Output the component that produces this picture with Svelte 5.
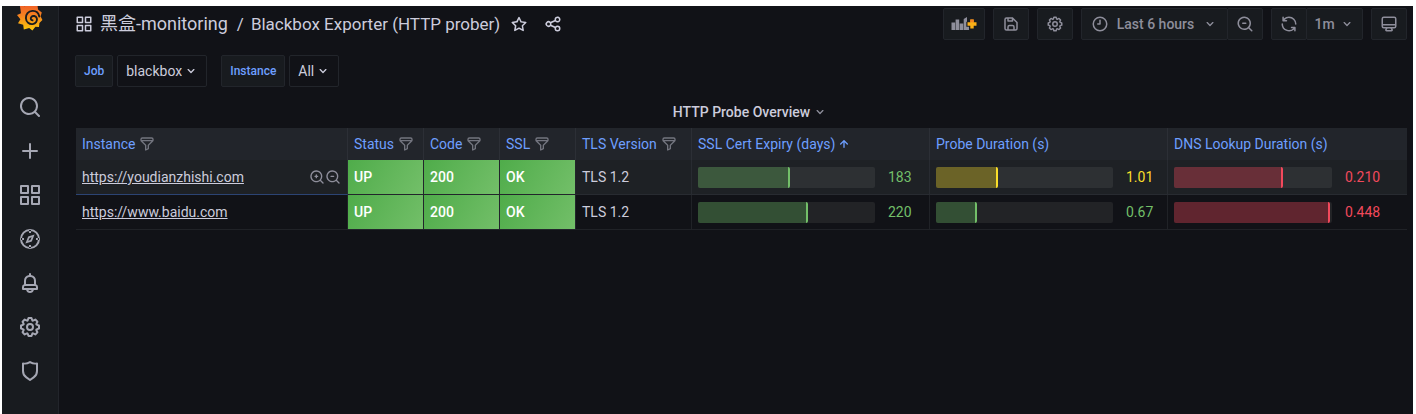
<script>
  const ring = 'M12,2A10,10,0,1,0,22,12,10,10,0,0,0,12,2Zm0,18a8,8,0,1,1,8-8A8,8,0,0,1,12,20Z';
  const lens = 'M21.71,20.29,18,16.61A9,9,0,1,0,16.61,18l3.68,3.68a1,1,0,0,0,1.42,0A1,1,0,0,0,21.71,20.29ZM11,18a7,7,0,1,1,7-7A7,7,0,0,1,11,18Z';
  const paths = {
    apps: 'M10,13H3a1,1,0,0,0-1,1v7a1,1,0,0,0,1,1h7a1,1,0,0,0,1-1V14A1,1,0,0,0,10,13ZM9,20H4V15H9ZM21,2H14a1,1,0,0,0-1,1v7a1,1,0,0,0,1,1h7a1,1,0,0,0,1-1V3A1,1,0,0,0,21,2ZM20,9H15V4h5Zm1,4H14a1,1,0,0,0-1,1v7a1,1,0,0,0,1,1h7a1,1,0,0,0,1-1V14A1,1,0,0,0,21,13Zm-1,7H15V15h5ZM10,2H3A1,1,0,0,0,2,3v7a1,1,0,0,0,1,1h7a1,1,0,0,0,1-1V3A1,1,0,0,0,10,2ZM9,9H4V4H9Z',
    down: 'M17,9.17a1,1,0,0,0-1.41,0L12,12.71,8.46,9.17a1,1,0,0,0-1.41,0,1,1,0,0,0,0,1.42l4.24,4.24a1,1,0,0,0,1.42,0L17,10.59A1,1,0,0,0,17,9.17Z',
    star: 'M22,9.67A1,1,0,0,0,21.14,9l-5.69-.83L12.9,3a1,1,0,0,0-1.8,0L8.55,8.16,2.86,9a1,1,0,0,0-.81.68,1,1,0,0,0,.25,1l4.13,4-1,5.68A1,1,0,0,0,6.9,21.44L12,18.77l5.1,2.67a.93.93,0,0,0,.46.12,1,1,0,0,0,.59-.19,1,1,0,0,0,.4-1l-1-5.68,4.13-4A1,1,0,0,0,22,9.67Zm-6.15,4a1,1,0,0,0-.29.88l.72,4.2-3.76-2a1.06,1.06,0,0,0-.94,0l-3.76,2,.72-4.2a1,1,0,0,0-.29-.88l-3-3,4.21-.61a1,1,0,0,0,.76-.55L12,5.7l1.88,3.82a1,1,0,0,0,.76.55l4.21.61Z',
    share: 'M18,14a4,4,0,0,0-3.08,1.48l-5.1-2.35a3.64,3.64,0,0,0,0-2.26l5.1-2.35A4,4,0,1,0,14,6a4.17,4.17,0,0,0,.07.71L8.79,9.14a4,4,0,1,0,0,5.72l5.28,2.43A4.17,4.17,0,0,0,14,18a4,4,0,1,0,4-4ZM18,4a2,2,0,1,1-2,2A2,2,0,0,1,18,4ZM6,14a2,2,0,1,1,2-2A2,2,0,0,1,6,14Zm12,6a2,2,0,1,1,2-2A2,2,0,0,1,18,20Z',
    save: 'M20.71,9.29l-6-6a1,1,0,0,0-.32-.21A1.09,1.09,0,0,0,14,3H6A3,3,0,0,0,3,6V18a3,3,0,0,0,3,3H18a3,3,0,0,0,3-3V10A1,1,0,0,0,20.71,9.29ZM9,5h4V7H9Zm6,14H9V16a1,1,0,0,1,1-1h4a1,1,0,0,1,1,1Zm4-1a1,1,0,0,1-1,1H17V16a3,3,0,0,0-3-3H10a3,3,0,0,0-3,3v3H6a1,1,0,0,1-1-1V6A1,1,0,0,1,6,5H7V8A1,1,0,0,0,8,9h6a1,1,0,0,0,1-1V6.41l4,4Z',
    cog: 'M21.32,9.55l-1.89-.63.89-1.78A1,1,0,0,0,20.13,6L18,3.87a1,1,0,0,0-1.15-.19l-1.78.89-.63-1.89A1,1,0,0,0,13.5,2h-3a1,1,0,0,0-.95.68L8.92,4.57,7.14,3.68A1,1,0,0,0,6,3.87L3.87,6a1,1,0,0,0-.19,1.15l.89,1.78-1.89.63A1,1,0,0,0,2,10.5v3a1,1,0,0,0,.68.95l1.89.63-.89,1.78A1,1,0,0,0,3.87,18L6,20.13a1,1,0,0,0,1.15.19l1.78-.89.63,1.89a1,1,0,0,0,.95.68h3a1,1,0,0,0,.95-.68l.63-1.89,1.78.89A1,1,0,0,0,18,20.13L20.13,18a1,1,0,0,0,.19-1.15l-.89-1.78,1.89-.63A1,1,0,0,0,22,13.5v-3A1,1,0,0,0,21.32,9.55ZM20,12.78l-1.2.4A2,2,0,0,0,17.64,16l.57,1.14-1.1,1.1L16,17.64a2,2,0,0,0-2.79,1.16l-.4,1.2H11.22l-.4-1.2A2,2,0,0,0,8,17.64l-1.14.57-1.1-1.1L6.36,16A2,2,0,0,0,5.2,13.18L4,12.78V11.22l1.2-.4A2,2,0,0,0,6.36,8L5.79,6.89l1.1-1.1L8,6.36A2,2,0,0,0,10.82,5.2l.4-1.2h1.56l.4,1.2A2,2,0,0,0,16,6.36l1.14-.57,1.1,1.1L17.64,8a2,2,0,0,0,1.16,2.79l1.2.4ZM12,8a4,4,0,1,0,4,4A4,4,0,0,0,12,8Zm0,6a2,2,0,1,1,2-2A2,2,0,0,1,12,14Z',
    clock: ring + 'M12,6a1,1,0,0,0-1,1v4H9a1,1,0,0,0,0,2h3a1,1,0,0,0,1-1V7A1,1,0,0,0,12,6Z',
    search: lens,
    zoomOut: lens + 'M13,10H9a1,1,0,0,0,0,2h4a1,1,0,0,0,0-2Z',
    zoomIn: lens + 'M13,10H12V9a1,1,0,0,0-2,0v1H9a1,1,0,0,0,0,2h1v1a1,1,0,0,0,2,0V12h1a1,1,0,0,0,0-2Z',
    sync: 'M19.91,15.51H15.38a1,1,0,0,0,0,2h2.4A8,8,0,0,1,4,12a1,1,0,0,0-2,0,10,10,0,0,0,16.88,7.23V21a1,1,0,0,0,2,0V16.5A1,1,0,0,0,19.91,15.51ZM12,2A10,10,0,0,0,5.12,4.77V3a1,1,0,0,0-2,0V7.5a1,1,0,0,0,1,1h4.5a1,1,0,0,0,0-2H6.22A8,8,0,0,1,20,12a1,1,0,0,0,2,0A10,10,0,0,0,12,2Z',
    monitor: 'M19,2H5A3,3,0,0,0,2,5V15a3,3,0,0,0,3,3H7.64l-.58,1a2,2,0,0,0,0,2,2,2,0,0,0,1.75,1h6.46A2,2,0,0,0,17,21a2,2,0,0,0,0-2l-.59-1H19a3,3,0,0,0,3-3V5A3,3,0,0,0,19,2ZM8.77,20,10,18H14l1.2,2ZM20,15a1,1,0,0,1-1,1H5a1,1,0,0,1-1-1V14H20Zm0-3H4V5A1,1,0,0,1,5,4H19a1,1,0,0,1,1,1Z',
    plus: 'M19,11H13V5a1,1,0,0,0-2,0v6H5a1,1,0,0,0,0,2h6v6a1,1,0,0,0,2,0V13h6a1,1,0,0,0,0-2Z',
    compass: ring + 'M11,3h2v3h-2ZM11,18h2v3h-2ZM3,11h3v2H3ZM18,11h3v2h-3ZM16.6,7.4,10.2,9.6,7.4,16.6,13.8,14.4ZM11.6,11,13.7,10.3,12.4,13,10.3,13.7Z',
    bell: 'M18,13.18V10a6,6,0,0,0-5-5.91V3a1,1,0,0,0-2,0V4.09A6,6,0,0,0,6,10v3.18A3,3,0,0,0,4,16v2a1,1,0,0,0,1,1H8.14a4,4,0,0,0,7.72,0H19a1,1,0,0,0,1-1V16A3,3,0,0,0,18,13.18ZM8,10a4,4,0,0,1,8,0v3H8Zm4,10a2,2,0,0,1-1.72-1h3.44A2,2,0,0,1,12,20Zm6-3H6V16a1,1,0,0,1,1-1H17a1,1,0,0,1,1,1Z',
    shield: 'M19.63,3.65a1,1,0,0,0-.84-.2,8,8,0,0,1-6.22-1.27,1,1,0,0,0-1.14,0A8,8,0,0,1,5.21,3.45a1,1,0,0,0-.84.2A1,1,0,0,0,4,4.43v7.45a9,9,0,0,0,3.77,7.33l3.65,2.6a1,1,0,0,0,1.16,0l3.65-2.6A9,9,0,0,0,20,11.88V4.43A1,1,0,0,0,19.63,3.65ZM18,11.88a7,7,0,0,1-2.93,5.7L12,19.77,8.93,17.58A7,7,0,0,1,6,11.88V5.58a10,10,0,0,0,6-1.39,10,10,0,0,0,6,1.39Z',
    filter: 'M19,2H5A3,3,0,0,0,2,5V6.17a3,3,0,0,0,.25,1.2l0,.06a2.81,2.81,0,0,0,.59.86L9,14.41V21a1,1,0,0,0,.47.85A1,1,0,0,0,10,22a1,1,0,0,0,.45-.11l4-2A1,1,0,0,0,15,19V14.41l6.12-6.12a2.81,2.81,0,0,0,.59-.86l0-.06A3,3,0,0,0,22,6.17V5A3,3,0,0,0,19,2ZM13.29,13.29A1,1,0,0,0,13,14v4.38l-2,1V14a1,1,0,0,0-.29-.71L5.41,8H18.59ZM20,6H4V5A1,1,0,0,1,5,4H19a1,1,0,0,1,1,1Z',
    up: 'M17.71,11.29l-5-5a1,1,0,0,0-.33-.21,1,1,0,0,0-.76,0,1,1,0,0,0-.33.21l-5,5a1,1,0,0,0,1.42,1.42L11,9.41V17a1,1,0,0,0,2,0V9.41l3.29,3.3a1,1,0,0,0,1.42,0A1,1,0,0,0,17.71,11.29Z'
  };

  const nav = [
    ['search', 'Search'], ['plus', 'Create'], ['apps', 'Dashboards'], ['compass', 'Explore'],
    ['bell', 'Alerting'], ['cog', 'Configuration'], ['shield', 'Server admin']
  ];
  const columns = [
    { name: 'Instance', cls: 'instance', filter: true },
    { name: 'Status', cls: 'short', filter: true },
    { name: 'Code', cls: 'short', filter: true },
    { name: 'SSL', cls: 'short', filter: true },
    { name: 'TLS Version', cls: 'tls', filter: true },
    { name: 'SSL Cert Expiry (days)', cls: 'gauge-col', sorted: true },
    { name: 'Probe Duration (s)', cls: 'gauge-col' },
    { name: 'DNS Lookup Duration (s)', cls: 'last-col' }
  ];
  const rows = [
    {
      url: 'https://youdianzhishi.com', active: true, flags: ['UP', '200', 'OK'], tls: 'TLS 1.2',
      gauges: [
        { text: '183', fill: 52, tone: 'green' },
        { text: '1.01', fill: 35, tone: 'yellow' },
        { text: '0.210', fill: 69, tone: 'red', wide: true }
      ]
    },
    {
      url: 'https://www.baidu.com', flags: ['UP', '200', 'OK'], tls: 'TLS 1.2',
      gauges: [
        { text: '220', fill: 62, tone: 'green' },
        { text: '0.67', fill: 23, tone: 'green' },
        { text: '0.448', fill: 99, tone: 'red', wide: true }
      ]
    }
  ];
</script>

{#snippet icon(name, size)}
  <svg class="icon" width={size} height={size} viewBox="0 0 24 24" fill="currentColor" fill-rule={name === 'compass' ? 'evenodd' : 'nonzero'} aria-hidden="true"><path d={paths[name]} /></svg>
{/snippet}

<div class="app">
  <nav class="sidebar" aria-label="Main">
    <a class="logo" href="#home" aria-label="Home">
      <svg width="26" height="26" viewBox="0 0 26 26" aria-hidden="true">
        <defs><linearGradient id="flame" x1="0" y1="0" x2="0" y2="1"><stop offset="0" stop-color="#f05a28" /><stop offset=".45" stop-color="#f58220" /><stop offset="1" stop-color="#fbca0a" /></linearGradient></defs>
        <path fill="url(#flame)" d="M2.800-1 8 .2 11.500-2.500 14.500 0 20.500-.8 21 3.400 24.800 6.400 23.600 10.200 25.400 14 22.400 17 22 21 18.400 20.800 15.400 24.400 12.200 22 6.800 23.600 6.200 18.800 1 17.200 3.400 13.200 0 9 4 7.200Z" />
        <path fill="none" stroke="#181b1f" stroke-width="1.900" stroke-linecap="round" d="M22.300 10.500C21.500 6.800 18.700 4.700 15.400 4.900 11.300 5.200 8.700 8.400 8.900 12.200 9.200 16.200 12.300 18.600 15.700 18.100 18.800 17.600 20.600 15 19.800 12.300 19 9.800 15.800 9.200 14.300 11 13.200 12.400 13.900 14.100 15.500 14.300" />
      </svg>
    </a>
    {#each nav as [name, label]}
      <a class="nav-item" href="#{name}" aria-label={label}>{@render icon(name, 24)}</a>
    {/each}
  </nav>

  <main>
    <header>
      <h1>
        {@render icon('apps', 18)}
        <a href="#folder">黑盒-monitoring</a>
        <span class="slash">/</span>
        <a class="name" href="#dashboard">Blackbox Exporter (HTTP prober)</a>
      </h1>
      <div class="actions">
        <button aria-label="Mark as favorite">{@render icon('star', 18)}</button>
        <button aria-label="Share dashboard">{@render icon('share', 18)}</button>
      </div>
      <div class="tools">
        <button class="tool add" aria-label="Add panel">
          <svg width="26" height="16" viewBox="0 0 26 16" aria-hidden="true">
            <path fill="currentColor" d="M.5 6.500h3.600V14H.5zM4.600 3.500h3.600V14H4.600zM8.700 7.500h3.500V14H8.700zM12.700 3 16 1v4.800h-.7v5H18V14h-5.300z" />
            <path fill="#fbb017" d="M19.300 3.500h3.400v2.800h2.800v3.400h-2.800v2.800h-3.400V9.700h-2.800V6.300h2.800z" />
            <path fill="#f58220" d="M19.300 3.500h3.400v2.800h-3.400z" />
          </svg>
        </button>
        <button class="tool" aria-label="Save dashboard">{@render icon('save', 18)}</button>
        <button class="tool" aria-label="Dashboard settings">{@render icon('cog', 18)}</button>
        <div class="group">
          <button class="tool range">{@render icon('clock', 18)}<span>Last 6 hours</span>{@render icon('down', 16)}</button>
          <button class="tool" aria-label="Zoom out time range">{@render icon('zoomOut', 18)}</button>
        </div>
        <div class="group">
          <button class="tool" aria-label="Refresh dashboard">{@render icon('sync', 18)}</button>
          <button class="tool interval"><span>1m</span>{@render icon('down', 16)}</button>
        </div>
        <button class="tool" aria-label="Cycle view mode">{@render icon('monitor', 18)}</button>
      </div>
    </header>

    <form class="variables">
      <div class="variable">
        <label for="job">Job</label>
        <div class="select"><select id="job"><option>blackbox</option></select>{@render icon('down', 16)}</div>
      </div>
      <div class="variable">
        <label for="instance">Instance</label>
        <div class="select"><select id="instance"><option>All</option></select>{@render icon('down', 16)}</div>
      </div>
    </form>

    <section class="panel">
      <h2>HTTP Probe Overview {@render icon('down', 16)}</h2>
      <table>
        <thead>
          <tr>
            {#each columns as col}
              <th class={col.cls} scope="col">
                <div class="head" class:sorted={col.sorted}>
                  <span>{col.name}</span>
                  {#if col.filter}<button class="filter" aria-label="Filter {col.name}">{@render icon('filter', 16)}</button>{/if}
                  {#if col.sorted}{@render icon('up', 16)}{/if}
                </div>
              </th>
            {/each}
          </tr>
        </thead>
        <tbody>
          {#each rows as row}
            <tr class:active={row.active}>
              <td class="first">
                <div class="link">
                  <a href={row.url}>{row.url}</a>
                  {#if row.active}
                    <span class="zooms">
                      <button aria-label="Filter for value">{@render icon('zoomIn', 16)}</button>
                      <button aria-label="Filter out value">{@render icon('zoomOut', 16)}</button>
                    </span>
                  {/if}
                </div>
              </td>
              {#each row.flags as flag}<td class="flag">{flag}</td>{/each}
              <td>{row.tls}</td>
              {#each row.gauges as g}
                <td>
                  <div class="gauge {g.tone}" class:wide={g.wide}>
                    <div class="track"><div class="fill" style="width: {g.fill}%"></div></div>
                    <span>{g.text}</span>
                  </div>
                </td>
              {/each}
            </tr>
          {/each}
        </tbody>
      </table>
    </section>
  </main>
</div>

<style>
  :global(body) { margin: 0; background: #fff; }
  * { box-sizing: border-box; }
  .app {
    display: flex;
    min-height: calc(100vh - 6px);
    margin: 6px 3px 0 2px;
    background: #111217;
    color: #ccccdc;
    font: 14px/20px Roboto, "Noto Sans CJK SC", sans-serif;
  }
  .icon { display: block; flex: none; }
  button { padding: 0; border: 0; background: none; color: inherit; font: inherit; }
  a { color: inherit; text-decoration: none; }

  .sidebar {
    display: flex;
    flex: none;
    flex-direction: column;
    width: 57px;
    border-right: 1px solid #22252b;
    background: #181b1f;
    color: #a5a7b3;
  }
  .logo { display: flex; justify-content: center; height: 79px; }
  .nav-item { display: flex; align-items: center; justify-content: center; height: 44px; }

  main { flex: 1; min-width: 0; padding: 0 6px 0 16px; }
  header { display: flex; align-items: center; height: 36px; }
  h1 { display: flex; align-items: center; gap: 7px; margin: 0; font-size: 18px; font-weight: 400; line-height: 24px; white-space: nowrap; }
  .slash { padding-left: 2px; }
  .slash, .name { font-size: 17px; }
  .actions { display: flex; gap: 16px; margin-left: 10px; }
  .tools { display: flex; gap: 8px; margin-left: auto; color: #8e8e9b; font-weight: 500; }
  .group { display: flex; }
  .tool {
    display: flex;
    align-items: center;
    justify-content: center;
    width: 36px;
    height: 32px;
    border: 1px solid #22252b;
    border-radius: 2px;
    background: #181b1f;
  }
  .group .tool + .tool { margin-left: -1px; }
  .add { width: 42px; }
  .range { gap: 8px; width: 147px; }
  .interval { gap: 4px; width: 57px; }

  .variables { display: flex; gap: 14px; margin-top: 13px; }
  .variable { display: flex; gap: 4px; }
  label, .select { border: 1px solid #22252b; border-radius: 2px; }
  label { padding: 0 8px; background: #181b1f; color: #6e9fff; font-size: 12px; font-weight: 500; line-height: 30px; }
  .select { display: flex; position: relative; }
  .select .icon { position: absolute; top: 7px; right: 7px; pointer-events: none; }
  select { height: 30px; padding: 0 24px 0 8px; border: 0; background: none; color: inherit; font: inherit; appearance: none; }

  .panel { padding-left: 1px; }
  h2 { display: flex; align-items: center; justify-content: center; gap: 2px; height: 32px; margin: 9px 0 0; padding-left: 18px; font-size: 14px; font-weight: 500; }
  h2 .icon { color: #8e8e9b; }
  table { width: 100%; border-collapse: separate; border-spacing: 0; table-layout: fixed; }
  th { height: 32px; padding: 0 6px; border-right: 1px solid #2c2f36; background: #22252b; color: #6e9fff; font-weight: 400; text-align: left; white-space: nowrap; }
  .short { width: 76px; }
  .tls { width: 116px; }
  .gauge-col { width: 238px; }
  .last-col { width: 239px; }
  .head { display: flex; align-items: center; gap: 4px; }
  .head.sorted { gap: 1px; }
  .filter { color: #73757f; }
  td { height: 35px; padding: 0 6px; border-right: 1px solid #202227; border-bottom: 1px solid #202227; }
  th:last-child, td:last-child { border-right: 0; }
  tr { --row: #111217; }
  .active { --row: #1e2125; }
  .active td { background: var(--row); border-color: #282b31; }
  .active .first { border-bottom-color: #2c4474; }
  td.flag, .active td.flag { border-color: #22252b; background: linear-gradient(120deg, #4fac4a, #73bf69) padding-box; color: #fff; font-weight: 500; }
  .link { display: flex; align-items: center; justify-content: space-between; }
  .link a { text-decoration: underline; }
  .zooms { display: flex; color: #8e8e9b; }
  .gauge { display: grid; grid-template-columns: 1fr 48px; align-items: center; }
  .gauge.wide { grid-template-columns: 1fr 69px; }
  .gauge span { padding-left: 13px; color: var(--tone); }
  .track { height: 21px; border-radius: 2px; background: #222326; }
  .active .track { background: #2d3033; }
  .fill { height: 100%; border-right: 2px solid var(--tone); border-radius: 2px; background: color-mix(in srgb, var(--tone) 35%, var(--row)); }
  .green { --tone: #73bf69; }
  .yellow { --tone: #fade2a; }
  .red { --tone: #f2495c; }
</style>
